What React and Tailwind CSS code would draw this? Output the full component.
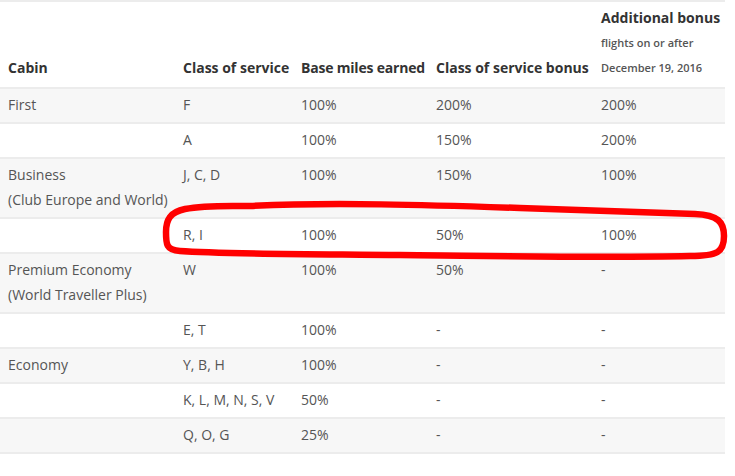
const rows = [
  { cabin: ['First'], cls: 'F', base: '100%', bonus: '200%', add: '200%' },
  { cabin: [], cls: 'A', base: '100%', bonus: '150%', add: '200%' },
  { cabin: ['Business', '(Club Europe and World)'], cls: 'J, C, D', base: '100%', bonus: '150%', add: '100%' },
  { cabin: [], cls: 'R, I', base: '100%', bonus: '50%', add: '100%' },
  { cabin: ['Premium Economy', '(World Traveller Plus)'], cls: 'W', base: '100%', bonus: '50%', add: '-' },
  { cabin: [], cls: 'E, T', base: '100%', bonus: '-', add: '-' },
  { cabin: ['Economy'], cls: 'Y, B, H', base: '100%', bonus: '-', add: '-' },
  { cabin: [], cls: 'K, L, M, N, S, V', base: '50%', bonus: '-', add: '-' },
  { cabin: [], cls: 'Q, O, G', base: '25%', bonus: '-', add: '-' },
];

export default function App() {
  return (
    <div className="relative w-[735px] h-[476px] bg-white overflow-hidden" style={{ fontFamily: '"Open Sans", sans-serif' }}>
      <table className="w-[725px] border-collapse table-fixed text-[14px] leading-[25px] text-[#555]">
        <colgroup>
          <col className="w-[175px]" />
          <col className="w-[118px]" />
          <col className="w-[135px]" />
          <col className="w-[165px]" />
          <col className="w-[132px]" />
        </colgroup>
        <thead>
          <tr className="border-t-2 border-b-2 border-[#ececec] text-[#333] font-semibold align-bottom whitespace-nowrap">
            <th className="text-left pl-2 pt-[3px] pb-[7px]">Cabin</th>
            <th className="text-left pl-2 pb-[7px]">Class of service</th>
            <th className="text-left pl-2 pb-[7px] tracking-[-0.2px]">Base miles earned</th>
            <th className="text-left pl-2 pb-[7px]">Class of service bonus</th>
            <th className="text-left pl-2 pt-[3px] pb-[7px]">
              <div>Additional bonus</div>
              <div className="text-[11px] font-semibold text-[#555]">flights on or after</div>
              <div className="text-[11px] font-semibold text-[#555]">December 19, 2016</div>
            </th>
          </tr>
        </thead>
        <tbody>
          {rows.map((r, i) => (
            <tr key={i} className={`border-b-2 border-[#ececec] align-top ${i % 2 === 0 ? 'bg-[#f7f7f7]' : 'bg-white'}`}>
              <td className="pl-2 pt-[3px] pb-[5px] whitespace-nowrap">
                {r.cabin.map((c) => (
                  <div key={c}>{c}</div>
                ))}
              </td>
              <td className="pl-2 pt-[3px] pb-[5px] whitespace-nowrap">{r.cls}</td>
              <td className="pl-2 pt-[3px] pb-[5px]">{r.base}</td>
              <td className="pl-2 pt-[3px] pb-[5px]">{r.bonus}</td>
              <td className="pl-2 pt-[3px] pb-[5px]">{r.add}</td>
            </tr>
          ))}
        </tbody>
      </table>
      <svg className="absolute left-0 top-0 pointer-events-none" width="735" height="476" viewBox="0 0 735 476">
        <path
          d="M 250 206 C 330 202, 430 205, 520 208 C 600 211, 650 212, 695 214 C 718 215, 724 222, 724 236 C 724 252, 718 256, 690 256 C 600 258, 500 256, 400 255 C 300 254, 220 254, 180 251 C 166 250, 166 244, 166 232 C 166 220, 170 212, 185 209 C 205 205, 225 206, 250 206 Z"
          fill="none"
          stroke="#ff0000"
          strokeWidth="6.5"
          strokeLinejoin="round"
        />
      </svg>
    </div>
  );
}
